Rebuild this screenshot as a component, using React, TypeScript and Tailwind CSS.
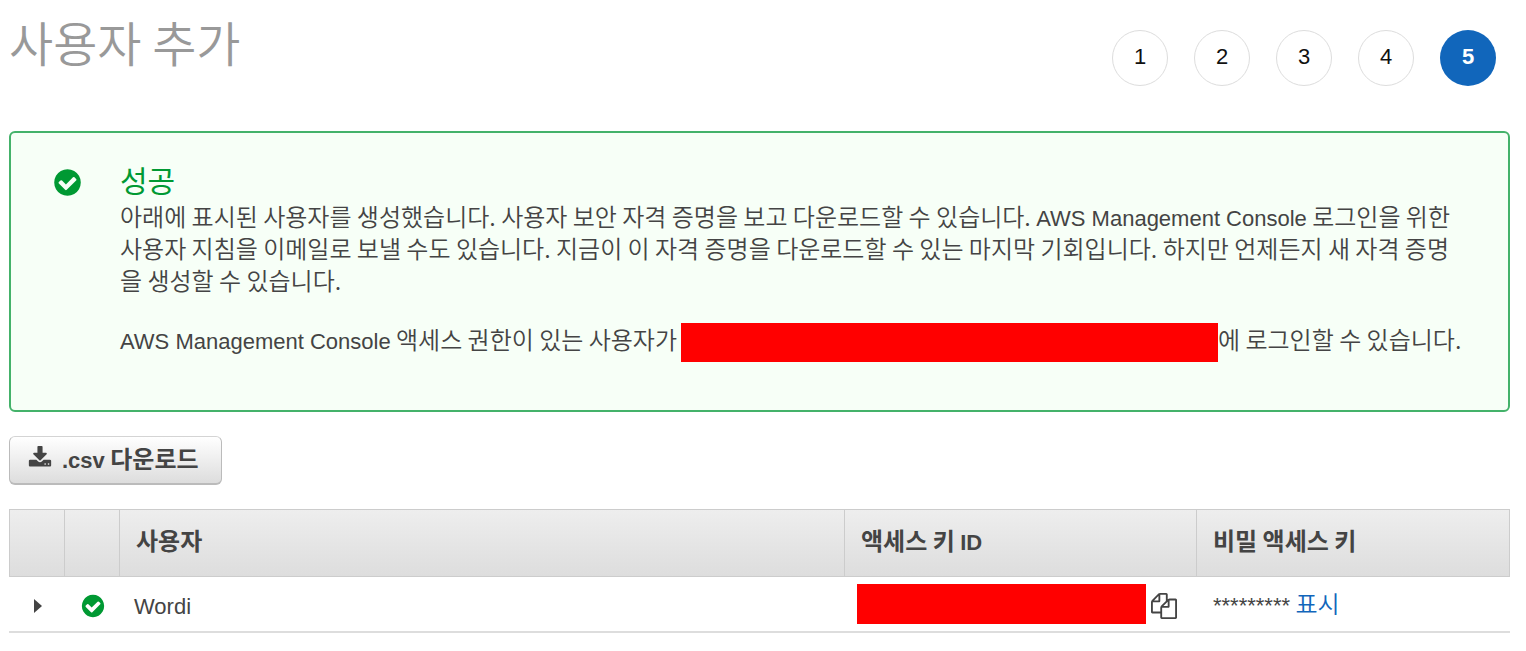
import type { ReactNode } from "react";

const steps = [1, 2, 3, 4, 5];
const currentStep = 5;

function Glyph({ d, className }: { d: string; className: string }) {
  return (
    <svg viewBox="0 0 1792 1792" fill="currentColor" aria-hidden="true" className={className}>
      <path d={d} />
    </svg>
  );
}

const CHECK_CIRCLE =
  "M1412 734q0-28-18-46l-91-90q-19-19-45-19t-45 19l-408 407-226-226q-19-19-45-19t-45 19l-91 90q-18 18-18 46 0 27 18 45l362 362q19 19 45 19 27 0 46-19l543-543q18-18 18-45zm252 162q0 209-103 385.5t-279.5 279.5-385.5 103-385.5-103-279.5-279.5-103-385.5 103-385.5 279.5-279.5 385.5-103 385.5 103 279.5 279.5 103 385.5z";
const DOWNLOAD =
  "M1344 1344q0-26-19-45t-45-19-45 19-19 45 19 45 45 19 45-19 19-45zm256 0q0-26-19-45t-45-19-45 19-19 45 19 45 45 19 45-19 19-45zm128-224v320q0 40-28 68t-68 28h-1472q-40 0-68-28t-28-68v-320q0-40 28-68t68-28h465l135 136q58 56 136 56t136-56l136-136h464q40 0 68 28t28 68zm-325-569q17 41-14 70l-448 448q-18 19-45 19t-45-19l-448-448q-31-29-14-70 17-39 59-39h256v-448q0-26 19-45t45-19h256q26 0 45 19t19 45v448h256q42 0 59 39z";
const FILES =
  "M1696 384q40 0 68 28t28 68v1216q0 40-28 68t-68 28h-960q-40 0-68-28t-28-68v-288h-544q-40 0-68-28t-28-68v-672q0-40 20-88t48-76l408-408q28-28 76-48t88-20h416q40 0 68 28t28 68v328q68-40 128-40h416zm-544 213l-299 299h299v-299zm-640-384l-299 299h299v-299zm196 647l316-316v-416h-384v416q0 40-28 68t-68 28h-416v640h512v-256q0-40 20-88t48-76zm956 804v-1152h-384v416q0 40-28 68t-68 28h-416v640h896z";

/** Latin runs are set in a slightly smaller grotesque than the Korean text around them. */
function Latin({ children }: { children: ReactNode }) {
  return <span className="font-['Liberation_Sans',sans-serif] text-[22px] leading-6">{children}</span>;
}

function HeaderCell({ children, label }: { children?: ReactNode; label?: string }) {
  return (
    <th
      scope="col"
      aria-label={label}
      className="h-[68px] border-y border-l border-[#cccccc] px-4 pb-1.5 text-left font-bold last:border-r"
    >
      {children}
    </th>
  );
}

export default function App() {
  return (
    <main className="bg-white pt-4 pr-4 pl-[9px] font-['Noto_Sans_CJK_KR',sans-serif] text-[24px] leading-8 text-[#444444]">
      <header className="flex items-start justify-between pr-3.5">
        <h1 className="text-[48px] leading-[50px] font-[350] text-[#999999]">사용자 추가</h1>
        <ol className="flex gap-[26px] pt-3.5">
          {steps.map((step) => (
            <li
              key={step}
              aria-current={step === currentStep ? "step" : undefined}
              className={
                step === currentStep
                  ? "flex size-14 items-center justify-center rounded-full bg-[#1166bb] pb-0.5 font-bold text-white"
                  : "flex size-14 items-center justify-center rounded-full border border-[#dddddd] pb-0.5 text-[#111111]"
              }
            >
              <Latin>{step}</Latin>
            </li>
          ))}
        </ol>
      </header>

      <section className="mt-[45px] flex rounded-md border-2 border-[#44b26a] bg-[#f7fff7] pt-8 pr-10 pb-12 pl-[41px]">
        <Glyph d={CHECK_CIRCLE} className="mt-0.5 size-[31px] shrink-0 text-[#009933]" />
        <div className="min-w-0 flex-1 pl-[37px] font-[350]">
          <h2 className="text-[30px] leading-7 font-normal text-[#009933]">성공</h2>
          <p className="mt-[7px] break-all">
            아래에 표시된 사용자를 생성했습니다. 사용자 보안 자격 증명을 보고 다운로드할 수 있습니다.{" "}
            <Latin>AWS Management Console</Latin> 로그인을 위한 사용자 지침을 이메일로 보낼 수도 있습니다. 지금이 이
            자격 증명을 다운로드할 수 있는 마지막 기회입니다. 하지만 언제든지 새 자격 증명을 생성할 수 있습니다.
          </p>
          <div className="mt-[27px] flex items-start whitespace-nowrap">
            <p className="pr-1">
              <Latin>AWS Management Console</Latin> 액세스 권한이 있는 사용자가
            </p>
            <span className="h-[39px] max-w-[537px] flex-1 bg-[#ff0000]" />
            <p>에 로그인할 수 있습니다.</p>
          </div>
        </div>
      </section>

      <button
        type="button"
        className="mt-6 flex h-[49px] items-center gap-2.5 rounded-md border border-b-2 border-[#bbbbbb] border-t-[#d4d4d4] bg-linear-to-b from-white to-[#dddddd] pr-[22px] pb-1 pl-[18px] font-bold"
      >
        <Glyph d={DOWNLOAD} className="size-6" />
        <span>
          <Latin>.csv</Latin> 다운로드
        </span>
      </button>

      <table className="mt-6 w-full table-fixed border-separate border-spacing-0">
        <colgroup>
          <col className="w-[55px]" />
          <col className="w-[55px]" />
          <col />
          <col className="w-[352px]" />
          <col className="w-[314px]" />
        </colgroup>
        <thead className="bg-linear-to-b from-[#eeeeee] to-[#dddddd]">
          <tr>
            <HeaderCell label="세부 정보" />
            <HeaderCell label="상태" />
            <HeaderCell>사용자</HeaderCell>
            <HeaderCell>
              액세스 키 <Latin>ID</Latin>
            </HeaderCell>
            <HeaderCell>비밀 액세스 키</HeaderCell>
          </tr>
        </thead>
        <tbody>
          <tr className="*:h-14 *:border-b-2 *:border-[#dddddd]">
            <td className="pt-1">
              <button type="button" aria-label="펼치기" className="flex w-full justify-center pl-0.5">
                <svg viewBox="0 0 8 14" fill="currentColor" aria-hidden="true" className="h-3.5 w-2">
                  <path d="M0 0L8 7L0 14Z" />
                </svg>
              </button>
            </td>
            <td className="pt-1 pl-0.5">
              <Glyph d={CHECK_CIRCLE} className="mx-auto size-[26px] text-[#009933]" />
            </td>
            <td className="px-[15px]">
              <Latin>Wordi</Latin>
            </td>
            <td className="pl-[13px]">
              <div className="flex items-center gap-[5px]">
                <span className="h-10 w-[289px] bg-[#ff0000]" />
                <button type="button" aria-label="복사" className="pt-1">
                  <Glyph d={FILES} className="size-[26px]" />
                </button>
              </div>
            </td>
            <td className="px-[17px] pb-0.5">
              <Latin>*********</Latin>{" "}
              <a href="#show" className="font-[350] text-[#1166bb]">
                표시
              </a>
            </td>
          </tr>
        </tbody>
      </table>
    </main>
  );
}
